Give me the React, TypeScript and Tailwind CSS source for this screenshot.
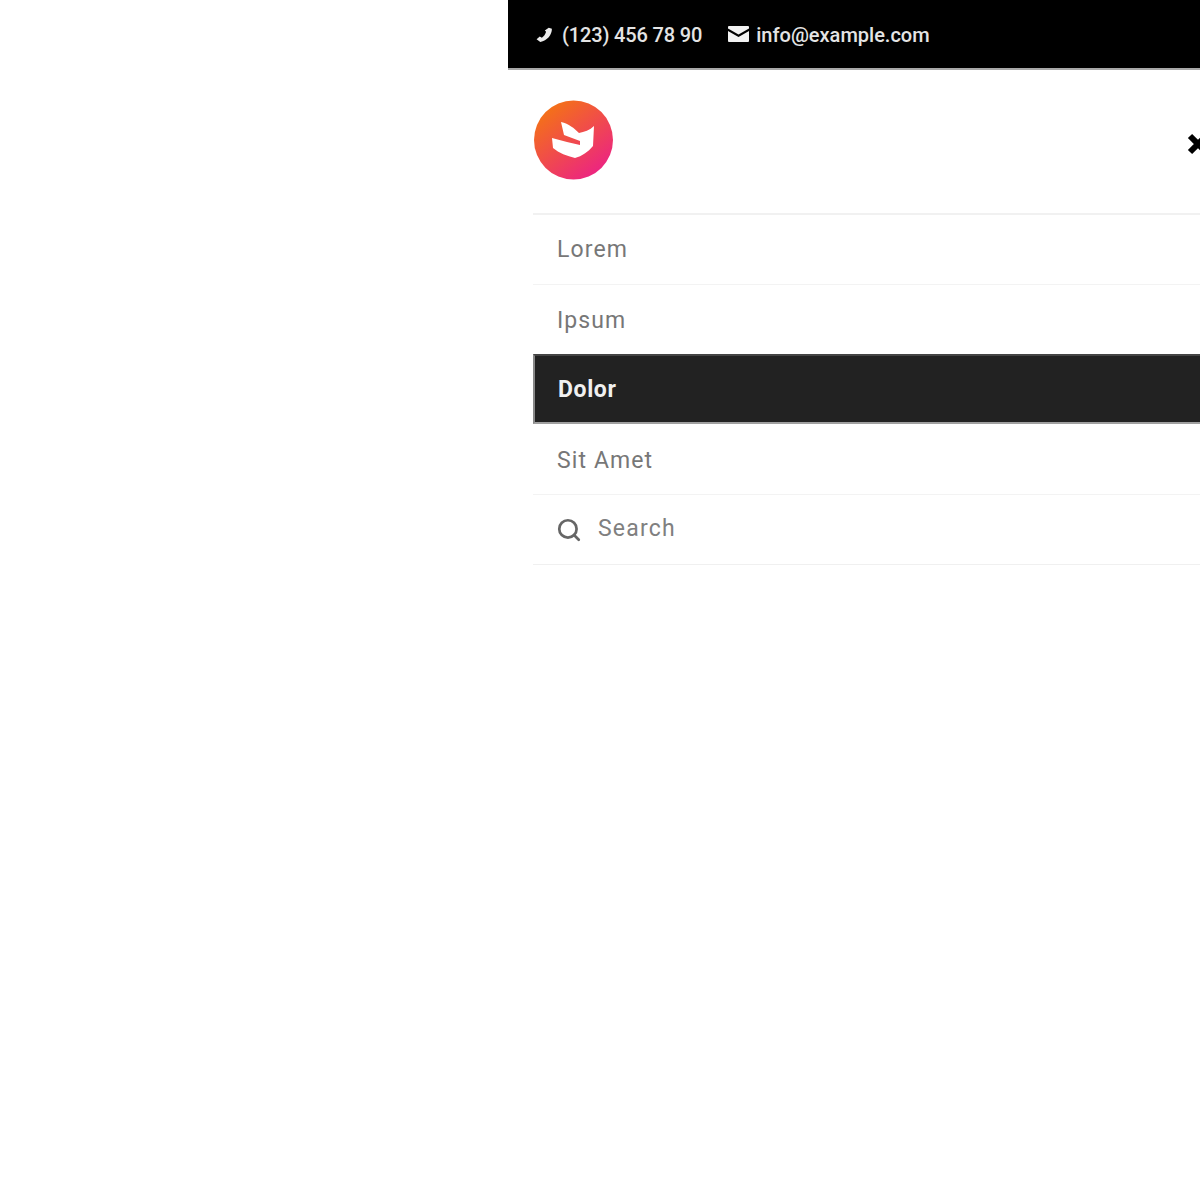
import { Search } from "lucide-react";

const font = "font-['Roboto','Liberation_Sans',sans-serif]";

export default function App() {
  return (
    <div className={`h-[1200px] w-[1200px] overflow-hidden bg-white ${font}`}>
      <div className="ml-[508px] w-[720px]">
        <div className="flex h-[70px] items-center gap-[26px] border-b-2 border-[#a8a8a8] bg-black pl-[27px] text-[20px] font-medium text-[#e4e4e4]">
          <div className="flex items-center gap-[8px] tracking-[-0.15px]">
            <svg width="19" height="19" viewBox="0 0 18 18" fill="#ececec">
              <path d="M13 2.500l3 1c.2 5.500-4.500 11.500-11 12.500l-3.500-2.500 3-2.500 2 1c2-1.200 3.300-3 4-5.500l-1.200-1.300z" />
            </svg>
            <span className="mt-[2px]">(123) 456 78 90</span>
          </div>
          <div className="flex items-center gap-[7px]">
            <svg width="21" height="16" viewBox="0 0 21 16" fill="#f2f2f2">
              <path d="M1 0h19a1 1 0 0 1 1 1v1.500l-10.500 6L0 2.500V1a1 1 0 0 1 1-1z" />
              <path d="M0 5l10.500 6L21 5v10a1 1 0 0 1-1 1H1a1 1 0 0 1-1-1z" />
            </svg>
            <span className="mt-[2px]">info@example.com</span>
          </div>
        </div>

        <div className="flex h-[143px] items-center justify-between pl-[26px] pr-[19px]">
          <svg width="80" height="80" viewBox="0 0 80 80" className="mt-[-3px]">
            <defs>
              <linearGradient id="logo" x1="0.15" y1="0.1" x2="0.8" y2="0.95">
                <stop offset="0" stopColor="#f47216" />
                <stop offset="1" stopColor="#ec2383" />
              </linearGradient>
            </defs>
            <circle cx="39.500" cy="40" r="39.500" fill="url(#logo)" />
            <path
              d="M27 22C35 24 40 28 45 33C50 32 56 30 60 26L59 46C54 52 48 56 41 58C33 56 25 53 19 48L18 38L33 42L46 45L46 41L30 35Z"
              fill="#ffffff"
            />
          </svg>
          <svg width="22" height="22" viewBox="0 0 22 22" className="mt-[5px]">
            <path d="M3 3l16 16M19 3L3 19" stroke="#000000" strokeWidth="6" />
          </svg>
        </div>

        <div className="ml-[25px] flex flex-col border-t-2 border-[#f1f1f1]">
          <div className="flex h-[70px] shrink-0 items-center border-b border-[#f3f3f3] pl-6 pt-[1px] text-[23px] tracking-[1.1px] text-[#777777]">
            Lorem
          </div>
          <div className="flex h-[69px] shrink-0 items-center pl-6 pt-[3px] text-[23px] tracking-[1.1px] text-[#777777]">
            Ipsum
          </div>
          <div className="flex h-[70px] shrink-0 items-center border-y-2 border-l-2 border-t-[#444444] border-b-[#a0a0a0] border-l-[#888888] bg-[#222222] pl-[23px] pt-[3px] text-[23px] font-bold tracking-[0.6px] text-[#f0f0f0]">
            Dolor
          </div>
          <div className="flex h-[71px] shrink-0 items-center border-b border-[#f3f3f3] pl-6 pt-[5px] text-[23px] tracking-[1.1px] text-[#777777]">
            Sit Amet
          </div>
          <div className="flex h-[70px] shrink-0 items-center gap-[16px] border-b border-[#f0f0f0] pl-[23px] text-[23px] tracking-[1.2px] text-[#808080]">
            <Search size={26} strokeWidth={2.500} color="#666666" />
            <span className="mt-[-1px]">Search</span>
          </div>
        </div>
      </div>
    </div>
  );
}
